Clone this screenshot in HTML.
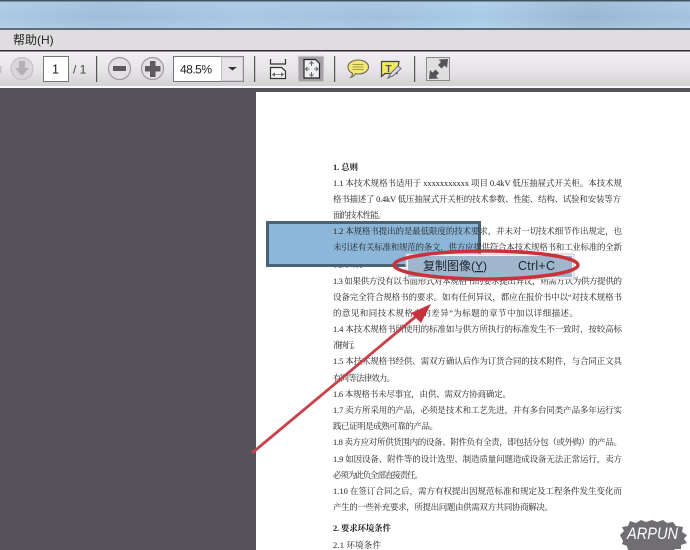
<!DOCTYPE html>
<html lang="zh">
<head>
<meta charset="utf-8">
<style>
html,body{margin:0;padding:0;background:#55525a}
svg{display:block}
.ui{font-family:"Liberation Sans","Noto Sans CJK SC",sans-serif}
.d text{font-family:"Liberation Serif","Noto Serif CJK SC",serif;font-size:8.5px;fill:#222}
</style>
</head>
<body>
<svg width="690" height="550" viewBox="0 0 690 550" xmlns="http://www.w3.org/2000/svg">
<defs>
<linearGradient id="sky" x1="0" y1="0" x2="1" y2="0">
<stop offset="0" stop-color="#a9c8e3"/><stop offset=".15" stop-color="#9dbedb"/><stop offset=".35" stop-color="#a6c7e4"/><stop offset=".55" stop-color="#a0c1de"/><stop offset=".7" stop-color="#a9cbe7"/><stop offset=".85" stop-color="#98b7d3"/><stop offset="1" stop-color="#a2c3e0"/>
</linearGradient>
<linearGradient id="tb" x1="0" y1="0" x2="0" y2="1">
<stop offset="0" stop-color="#f1eff1"/><stop offset=".55" stop-color="#e6e4e6"/><stop offset="1" stop-color="#d2d0d2"/>
</linearGradient>
<linearGradient id="fade" x1="0" y1="0" x2="0" y2="1">
<stop offset="0" stop-color="#fff" stop-opacity=".12"/><stop offset=".6" stop-color="#fff" stop-opacity="0"/><stop offset="1" stop-color="#fff" stop-opacity=".15"/>
</linearGradient>
<filter id="soft"><feGaussianBlur stdDeviation=".3"/></filter>
<filter id="soft2"><feGaussianBlur stdDeviation=".35"/></filter>
</defs>

<!-- window chrome -->
<rect width="690" height="550" fill="#55525a"/>
<rect y="0" width="690" height="29" fill="url(#sky)"/>
<rect y="0" width="690" height="29" fill="url(#fade)"/>
<rect y="0" width="690" height="1.5" fill="#3f5563"/>
<rect y="28" width="690" height="2" fill="#5d6c78"/>
<rect y="30" width="690" height="20" fill="#e0dde0"/>
<text class="ui" x="13" y="44" font-size="12" fill="#222">帮助(H)</text>
<rect y="50" width="690" height="1.5" fill="#2f2d2f"/>
<rect y="51.5" width="690" height="35" fill="url(#tb)"/>
<rect y="86" width="690" height="2" fill="#f8f8f8"/>

<!-- down arrow button -->
<rect x="0" y="66" width="1.5" height="7" fill="#c4c2c4"/>
<circle cx="22" cy="68.5" r="11" fill="#d9d7d9" stroke="#c4c2c4" stroke-width="1.2"/>
<path d="M19 61h6v7h4l-7 8-7-8h4z" fill="#b2b0b2"/>

<!-- page box -->
<rect x="43.5" y="56.5" width="25" height="25" fill="#fff" stroke="#77757a"/>
<text class="ui" x="55.5" y="73.500" font-size="12.500" fill="#222" text-anchor="middle">1</text>
<text class="ui" x="73" y="73.500" font-size="12" fill="#444">/ 1</text>
<rect x="96" y="56" width="1.2" height="26" fill="#555"/>

<!-- zoom out / in -->
<circle cx="119.500" cy="68.500" r="11" fill="#e2e0e2" stroke="#9c9a9c" stroke-width="1.2"/>
<rect x="113" y="66" width="13" height="5" fill="#5c5a5c"/>
<circle cx="152.500" cy="68.500" r="11" fill="#e2e0e2" stroke="#9c9a9c" stroke-width="1.2"/>
<path d="M150 61h5.500v5h5v5.500h-5v5.500h-5.500v-5.500h-5v-5.500h5z" fill="#5c5a5c"/>

<!-- zoom select -->
<rect x="173.500" y="56.500" width="70" height="25" fill="#fff" stroke="#77757a"/>
<rect x="221.500" y="57" width="21.500" height="24" fill="#e6e4e6" stroke="#b2b0b2" stroke-width=".8"/>
<path d="M228 67h9l-4.500 3.500z" fill="#333"/>
<text class="ui" x="180" y="73.500" font-size="12" fill="#222" textLength="32">48.5%</text>
<rect x="254" y="56" width="1.2" height="26" fill="#555"/>

<!-- fit width -->
<path d="M270.500 59v5h15v-5" fill="none" stroke="#333" stroke-width="1.200"/>
<path d="M270.500 67.500h11l4 3.500v7.500h-15z" fill="#f6f6f6" stroke="#333" stroke-width="1.200"/>
<path d="M272.500 74.500h11M272.500 74.500l2-1.500v3zM283.500 74.500l-2-1.500v3z" fill="#666" stroke="#666" stroke-width=".8"/>

<!-- fit page (active) -->
<rect x="298" y="56" width="26" height="26" fill="#a4a2a4" stroke="#dedcde"/>
<path d="M304 59.500h11.500l4 4v14.500h-15.500z" fill="#eef0f2" stroke="#222" stroke-width="1.200"/>
<path d="M311.500 62v4M309.500 64l2-2.500 2 2.500M311.500 76v-4M309.500 74l2 2.500 2-2.500M305.500 69h4M307.500 67l-2 2 2 2M318 69h-4M316 67l2 2-2 2" fill="none" stroke="#667" stroke-width="1"/>
<rect x="334" y="56" width="1.200" height="26" fill="#555"/>

<!-- comment icon -->
<path d="M358 60c6 0 10.500 3 10.500 7s-4.500 7-10 7c-1 0-2 0-3-.3-1 1.500-2.500 3-4.500 3.500 1-1 1.500-2.500 1.500-4-2.800-1.200-4.500-3.500-4.500-6.200 0-4 4.500-7 10-7z" fill="#f3e77a" stroke="#6d6a55" stroke-width="1.100"/>
<path d="M352.500 64.500h11M352.500 67h11M352.500 69.500h11" stroke="#a89a40" stroke-width="1"/>

<!-- text note icon -->
<path d="M381.500 61.500h17.500l-2 12h-12l-3.500 3z" fill="#f0e860" stroke="#444" stroke-width="1.200"/>
<text class="ui" x="385.500" y="72" font-size="10" font-weight="bold" fill="#555">T</text>
<path d="M388 78l3-5 7-7 3 2.500-7.500 7z" fill="#d8dce2" stroke="#667" stroke-width="1"/>
<rect x="414" y="56" width="1.200" height="26" fill="#555"/>

<!-- fullscreen -->
<rect x="426.500" y="57.500" width="23" height="23" fill="#dfdfdf" stroke="#8c8a8c"/>
<path d="M448 59l-1 9-2.500-2.500-3 3-3.500-3.500 3-3-2.500-2.500zM429 79l1-9 2.500 2.500 3-3 3.500 3.500-3 3 2.500 2.500z" fill="#56545a"/>

<!-- document page -->
<rect x="250" y="88" width="6" height="462" fill="#55525a"/>
<rect x="256" y="92" width="434" height="458" fill="#fff"/>

<g class="d" filter="url(#soft)">
<text x="333" y="170" textLength="25" font-weight="bold">1. 总则</text>
<text x="333" y="186" textLength="289">1.1 本技术规格书适用于 xxxxxxxxxxx 项目 0.4kV 低压抽屉式开关柜。本技术规</text>
<text x="333" y="202" textLength="288">格书描述了 0.4kV 低压抽屉式开关柜的技术参数、性能、结构、试验和安装等方</text>
<text x="333" y="218" textLength="53">面的技术性能。</text>
<text x="333" y="267" textLength="35">优质产品。</text>
<text x="333" y="284" textLength="289">1.3 如果供方没有以书面形式对本规格书的要求提出异议，则需方认为供方提供的</text>
<text x="333" y="300" textLength="289">设备完全符合规格书的要求。如有任何异议，都应在报价书中以“对技术规格书</text>
<text x="333" y="316" textLength="245">的意见和同技术规格书的差异”为标题的章节中加以详细描述。</text>
<text x="333" y="332" textLength="289">1.4 本技术规格书所使用的标准如与供方所执行的标准发生不一致时，按较高标</text>
<text x="333" y="348" textLength="27">准执行。</text>
<text x="333" y="364" textLength="289">1.5 本技术规格书经供、需双方确认后作为订货合同的技术附件，与合同正文具</text>
<text x="333" y="381" textLength="62">有同等法律效力。</text>
<text x="333" y="397" textLength="178">1.6 本规格书未尽事宜，由供、需双方协商确定。</text>
<text x="333" y="413" textLength="289">1.7 卖方所采用的产品，必须是技术和工艺先进，并有多台同类产品多年运行实</text>
<text x="333" y="429" textLength="105">践已证明是成熟可靠的产品。</text>
<text x="333" y="445" textLength="289">1.8 卖方应对所供货围内的设备、附件负有全责，即包括分包（或外购）的产品。</text>
<text x="333" y="462" textLength="289">1.9 如因设备、附件等的设计选型、制造质量问题造成设备无法正常运行，卖方</text>
<text x="333" y="478" textLength="90">必须为此负全部直接责任。</text>
<text x="333" y="494" textLength="289">1.10 在签订合同之后，需方有权提出因规范标准和规定及工程条件发生变化而</text>
<text x="333" y="510" textLength="220">产生的一些补充要求，所提出问题由供需双方共同协商解决。</text>
<text x="333" y="531" textLength="58" font-weight="bold">2. 要求环境条件</text>
<text x="333" y="548" textLength="48">2.1 环境条件</text>
</g>

<!-- selection rectangle -->
<path d="M267.500 222.500H479.500V265.500H267.500z" fill="#8db7d8" stroke="#4a6275" stroke-width="3"/>
<g class="d" filter="url(#soft)">
<text x="333" y="234" textLength="289">1.2 本规格书提出的是最低限度的技术要求，并未对一切技术细节作出规定，也</text>
<text x="333" y="250" textLength="289">未引述有关标准和规范的条文，供方应提供符合本技术规格书和工业标准的全新</text>
</g>

<!-- context menu -->
<rect x="406" y="254" width="168" height="25" fill="#f4f4f4" stroke="#c8c8c8"/>
<rect x="408" y="256" width="164" height="21" fill="#9fb6cc"/>
<text class="ui" x="423" y="270" font-size="12" fill="#1c2730">复制图像(<tspan text-decoration="underline">Y</tspan>)</text>
<text class="ui" x="518" y="270" font-size="12.500" fill="#1c2730" textLength="37">Ctrl+C</text>

<!-- red annotations -->
<ellipse cx="486" cy="265" rx="92" ry="14" fill="none" stroke="#c8323a" stroke-width="3.500" filter="url(#soft2)"/>
<g filter="url(#soft2)">
<path d="M252 453L420 313" stroke="#c8424a" stroke-width="2.800" fill="none"/>
<path d="M431 304L411 313 421 323z" fill="#c8323c"/>
</g>

<!-- watermark -->
<path d="M620 535l4-4-2-4 6-1 2-5 6 2 5-3 5 2 6-2 5 2 6-2 4 3 6-1 3 4 7 1-1 5 5 3-3 4 3 4-6 2 0 4-6 0-3 3-7-1-5 2-5-2-6 2-5-2-6 1-5-2-5 0-1-4-5-2 1-3z" fill="#706e72" filter="url(#soft2)"/>
<text x="627" y="539" font-family="Liberation Sans,sans-serif" font-size="17" font-style="italic" fill="#fff" textLength="51" lengthAdjust="spacingAndGlyphs">ARPUN</text>
</svg>
</body>
</html>
